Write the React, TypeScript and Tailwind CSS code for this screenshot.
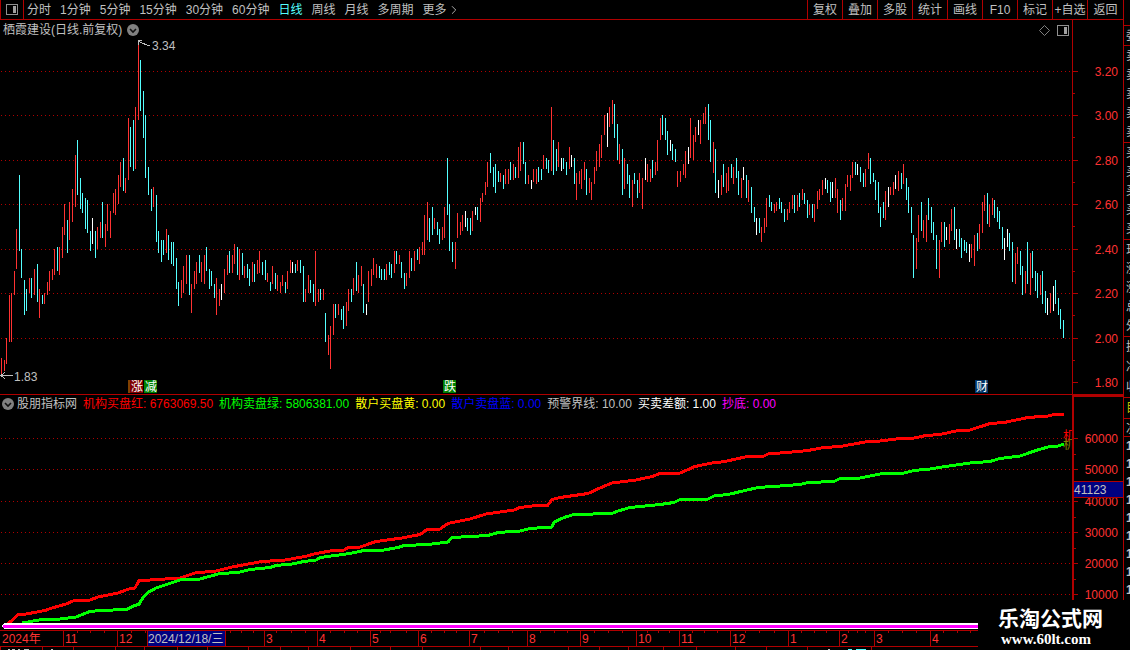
import { ChevronRight } from 'lucide-react';

// One entry per trading day: colour (r up, c down, w flat), top and bottom of the bar
const barGroups = [
  {
    start: 1,
    bars: `r298-314 r300-311 r278-304 r235-282 r233-282 r211-235 r169-209 c115-191 c189-218 c220-255
      c229-251 r218-233 c218-238 r209-235 c204-242 r229-258 c235-244 r233-244 r222-235 r211-231
      r209-220 r189-215 c187-211 r187-215 r167-198 r144-175 c160-193 r142-180 r129-162 r95-147
      c80-135 c118-149 c133-153 c138-169 c140-173 c171-191 w158-184 c171-198 r167-189 r162-178
      c142-178 r164-187 r144-171 r151-178 r133-153 r129-155 r115-144 r102-127 c98-131 r118-133
      r58-120 c67-107 c60-111 r47-109 r-20-60 c0-51 c31-78 c55-118 c107-135 c129-151
      r127-147 c135-182 c171-193 c180-202 c180-195 r169-193 c175-200 c182-204 c182-206 c198-229
      c222-246 r220-238 r206-233 r195-224 c195-235 r224-253 r211-229 r202-224 c195-213 r202-222
      r195-224 c187-211 c209-229 c211-226 c224-238 r218-255 r229-246 w224-240 r209-233 r195-215
      c191-213 r195-213 r184-204 c187-215 r189-220 c193-215 r206-218 c204-218 c209-226 r202-222
      c204-222 r200-214 r191-213 c202-215 c200-220 r213-222 c222-231 r206-224 c213-229 r215-231
      r222-233 r215-226 c222-233 r211-229 r200-213 w202-213 c204-213 r200-211 c200-213 c206-242
      r229-242 r215-233 c220-233 c224-242 r191-246 r229-242 c229-240 r229-240 c253-282 r275-295
      r266-309 r244-275 c244-258 r244-255 c249-260 c246-269 r242-266 r229-251 c229-242 r218-235
      c202-231 r215-233 r206-226 c224-253 w244-255 r211-242 r209-226 r198-215 r204-218 c206-218`,
  },
  {
    start: 381,
    bars: `c209-220 c209-220 r204-220 c202-215 c204-218 r191-213 c191-204 r195-204 c202-218 c213-229
      r213-226 r191-218 c198-211 r191-211 c189-200 r187-204 r182-195 r155-195 r142-180 c158-182
      c147-175 r158-169 c162-175 c169-184 r167-180 r147-178 c98-155 c144-191 c182-202 r182-209
      r153-178 r162-175 r155-171 w151-167 c158-171 c158-175 r151-171 w147-155 c147-160 r138-162
      r133-142 r122-135 r102-127 c93-113 c107-127 c104-133 c111-122 r113-122 c115-129 r109-124
      r109-124 c102-120 r104-120 c107-118 r87-118 r82-111 c82-104 c102-124 r115-124 w120-129
      r109-122 r109-124 c107-122 c109-120 r95-109 c98-109 c100-113 r47-111 c80-115 c89-111
      r82-107 w98-111 c98-109 c102-115 r87-109 w95-107 c98-124 r113-140 r111-124 r109-129
      r102-120 c109-135 r118-133 r122-140 r107-124 r91-111 r84-107 r75-98 r55-75 w53-87
      r47-67 r40-64 c44-78 c64-100 r84-104 c89-135 r98-129 c104-124 c115-138 r120-147
      c113-124 c120-138 r113-133 r118-149 w98-120 r104-122 r109-122 c100-118 r102-115 r80-111
      r58-80 c55-75 c58-80 c71-95 w80-91 c84-100 c89-102 r111-127 r111-122 r104-115
      r91-118 w87-104 r58-98 r75-100 r67-82 w60-75 r60-84 r53-64 r47-64 c44-80
      c60-102 r82-113 c89-133 w120-138 r115-135 c104-127 r113-133 r107-131 c104-118 r107-124
      c98-118 c111-135 r118-138 w107-120 c115-138 r120-142`,
  },
  {
    start: 751,
    bars: `c127-153 c147-162 w158-175 c158-173 r167-182 r158-173 r138-167 c135-147 c142-151 r144-153
      r142-151 c138-149 c142-153 c149-162 r149-160 r142-153 r135-149 c135-153 r135-151 c133-147
      r129-140 c133-144 c140-158 r144-155 c144-158 r144-162 r131-149 r129-140 r120-135 w118-129
      c120-133 c122-142 w122-138 r118-138 r129-153 c140-160 r138-151 r124-151 r115-127 r115-131
      r102-118 c102-115 w104-115 c107-122 c113-127 r109-127 r93-109 c98-124 c113-122 c120-140
      c122-153 c147-167 c142-158 r131-160 w127-147 r127-135 r122-135 w115-129 r111-131 c113-129
      r104-124 c118-140 c127-153 c147-173 c175-218 r178-209 r155-182 c142-171 r160-178 r155-182
      c138-160 c147-173 c162-180 c175-209 r180-218 r162-182 c162-187 w167-180 r164-184 r149-171
      c147-180 w169-189 c169-187 c178-198 c180-191 c182-193 w184-202 r184-198 r175-206 c173-191
      r164-189 r142-173 r135-151 c133-164 r144-167 r138-155 c140-158 c147-162 c151-169 c167-189
      w178-200 w169-187 c173-191 c182-222 r193-224 r187-204 c191-215 c206-235 r211-233 c182-224
      r193-235 c191-218 c211-231 c213-238 r215-235 c211-244 c231-253 w238-255 r233-253 w226-251
      c220-244 c238-255 c249-269 c260-278`,
  },
];

const barColors: Record<string, string> = { r: '#ff3232', c: '#54ffff', w: '#ffffff' };
const BAR_STEP = 2.533;

const bars = barGroups.flatMap(({ start, bars }) =>
  bars.split(/\s+/).map((entry, i) => {
    const [, color, top, bottom] = entry.match(/^([rcw])(-?\d+)-(\d+)$/)!;
    return {
      x: Math.floor(start + 0.6 + i * BAR_STEP),
      top: Number(top),
      height: Number(bottom) - Number(top),
      color: barColors[color],
    };
  })
);

const buyLine =
  '3,626 9,623 18,614.5 26,614 45,610.5 52,608 66,604 74,600.5 90,600 98,597 118,593 129,589 135,588 139,580.5 150,580 180,578 195,573 216,571 232,567 262,561.5 285,560 305,556.5 316,553.5 333,550.5 344,550 348,547.5 360,547 376,541.5 402,538 420,534.5 427,529.5 440,529 448,523.5 455,522 470,519 486,514 514,510 520,507.5 540,505 548,505 552,499.5 560,497.5 588,493.5 600,488 612,483 636,480 652,476.5 660,473.5 680,473 695,466.5 712,463 725,461.5 747,456.5 764,456 768,454 798,451.5 808,450.5 824,447.5 840,446.5 868,441.5 880,441 900,438.5 914,438 926,435.5 940,434.5 958,430.5 970,430 990,423.5 1004,422.5 1028,417.5 1048,416 1052,415 1064,414.5';
const sellLine =
  '22,623 42,619.5 60,619 76,617 90,611.5 100,610.5 127,609.5 134,605.5 139,604.5 142,599 148,592.5 156,588 168,584 180,580 200,579 218,574 240,572 250,569.5 270,567.5 276,565.5 292,564 304,561.5 316,560 320,557.5 350,553.5 364,550.5 384,550 398,547.5 404,545.5 428,544.5 448,542 452,537.5 488,535.5 498,532.5 520,531 530,528.5 552,527 554,522 564,517.5 574,514.5 612,513.5 618,511 630,507.5 660,504.5 674,502.5 680,499.5 707,499.5 714,496 728,494.5 758,487.5 780,486 800,484.5 808,482.5 834,481.5 840,478.5 860,478 880,474 904,473 914,470.5 930,469 942,467 970,463 990,461.5 1000,458.5 1020,456 1036,450.5 1048,447 1058,446 1064,444';

const periods = ['分时', '1分钟', '5分钟', '15分钟', '30分钟', '60分钟', '日线', '周线', '月线', '多周期'];
const tools = ['复权', '叠加', '多股', '统计', '画线', 'F10', '标记', '+自选', '返回'];

const priceTicks = [
  { y: 33, label: '3.20' },
  { y: 77, label: '3.00' },
  { y: 122, label: '2.80' },
  { y: 166, label: '2.60' },
  { y: 211, label: '2.40' },
  { y: 255, label: '2.20' },
  { y: 300, label: '2.00' },
  { y: 344, label: '1.80' },
];

const volumeTicks = [
  { y: 26, label: '60000' },
  { y: 57, label: '50000' },
  { y: 89, label: '40000' },
  { y: 120, label: '30000' },
  { y: 151, label: '20000' },
  { y: 182, label: '10000' },
];

const readings = [
  { text: '机构买盘红: 6763069.50', className: 'text-[#ff0000]' },
  { text: '机构卖盘绿: 5806381.00', className: 'text-[#00ff00]' },
  { text: '散户买盘黄: 0.00', className: 'text-[#ffff00]' },
  { text: '散户卖盘蓝: 0.00', className: 'text-[#0000ff]' },
  { text: '预警界线: 10.00', className: 'text-[#c0c0c0]' },
  { text: '买卖差额: 1.00', className: 'text-white' },
  { text: '抄底: 0.00', className: 'text-[#ff00ff]' },
];

const months = [
  { x: 63, label: '11' },
  { x: 117, label: '12' },
  { x: 264, label: '3' },
  { x: 317, label: '4' },
  { x: 370, label: '5' },
  { x: 418, label: '6' },
  { x: 469, label: '7' },
  { x: 527, label: '8' },
  { x: 580, label: '9' },
  { x: 636, label: '10' },
  { x: 679, label: '11' },
  { x: 730, label: '12' },
  { x: 788, label: '1' },
  { x: 839, label: '2' },
  { x: 874, label: '3' },
  { x: 930, label: '4' },
];

const weekTicks = [
  77, 90, 104, 131, 145, 230, 241, 253, 276, 291, 305, 330, 344, 357, 380, 390, 406, 431, 444, 456, 484, 498, 512,
  540, 554, 567, 594, 608, 622, 647, 658, 669, 692, 704, 717, 745, 759, 774, 801, 814, 826, 848, 857, 865, 888, 902,
  916, 943, 957, 970,
];

const footerTicks = [
  0, 42, 73, 115, 144, 177, 207, 248, 280, 308, 350, 390, 422, 480, 508, 568, 599, 628, 663, 696, 735, 766, 807, 871,
];

const quoteGroups = [
  { className: 'h-[20px] mt-[25px]', rows: ['委'] },
  { className: 'h-[97px]', rows: ['卖', '卖', '卖', '卖', '卖'] },
  { className: 'h-[97px]', rows: ['买', '买', '买', '买', '买'] },
  { className: 'h-[97px]', rows: ['现', '涨', '涨', '总', '外'] },
  { className: 'h-[61px]', rows: ['换', '净', '收'] },
];

function CollapseButton() {
  return (
    <button className="shrink-0" aria-label="收起">
      <svg className="w-3 h-3 block" viewBox="0 0 12 12" fill="none">
        <circle cx="6" cy="6" r="6" fill="#808080" />
        <path d="M3 5l3 3 3-3" stroke="#101010" strokeWidth="1.6" />
      </svg>
    </button>
  );
}

function PanelIcon({ className }: { className: string }) {
  return (
    <svg className={className} viewBox="0 0 12 11" fill="none" shapeRendering="crispEdges">
      <rect x="0.5" y="0.5" width="11" height="10" rx="1" stroke="#909090" />
      <rect x="7" y="2" width="3" height="7" fill="#a0a0a0" />
    </svg>
  );
}

function Toolbar() {
  return (
    <header className="flex h-5 shrink-0 border-b border-[#b00000] text-[#c0c0c0]">
      <button className="w-6 flex items-center justify-center border-x border-[#b00000]" aria-label="侧栏">
        <PanelIcon className="w-3 h-[11px]" />
      </button>
      <nav className="flex flex-1 items-center gap-[9px] pl-[3px] whitespace-nowrap">
        {periods.map((period) => (
          <button key={period} className={period === '日线' ? 'text-[#54ffff]' : ''}>
            {period}
          </button>
        ))}
        <button className="flex items-center">
          更多
          <ChevronRight className="w-3.5 h-3.5" strokeWidth={1.5} />
        </button>
      </nav>
      <div className="flex whitespace-nowrap">
        {tools.map((tool) => (
          <button key={tool} className="w-[35px] last:w-9 border-l border-[#b00000] text-center">
            {tool}
          </button>
        ))}
      </div>
    </header>
  );
}

function Grid({ rows }: { rows: number[] }) {
  return (
    <>
      {rows.map((y) => (
        <line key={y} x1="1" x2="100%" y1={y + 0.5} y2={y + 0.5} stroke="#b00000" strokeDasharray="1 3" />
      ))}
    </>
  );
}

interface MarkProps {
  x: number;
  fill: string;
  label: string;
}

function Mark({ x, fill, label }: MarkProps) {
  return (
    <g>
      <rect x={x} y="342" width="13" height="13" fill={fill} />
      <text x={x + 1} y="353" fill="#ffffff">
        {label}
      </text>
    </g>
  );
}

function PriceChart() {
  return (
    <section className="flex shrink-0 border-b border-[#b00000]">
      <div className="flex-1 min-w-0">
        <div className="flex h-[18px] items-center gap-[5px] pt-0.5 px-[3px] text-[#c0c0c0]">
          <h1>栖霞建设(日线.前复权)</h1>
          <CollapseButton />
          <button className="ml-auto mr-0.5" aria-label="标记点">
            <svg className="w-[11px] h-[11px] block" viewBox="0 0 11 11" fill="none">
              <path d="M5.5 0.5l5 5-5 5-5-5z" stroke="#808080" />
            </svg>
          </button>
          <button aria-label="面板">
            <PanelIcon className="w-3 h-[11px]" />
          </button>
        </div>
        <svg className="block w-full h-[356px] text-xs" shapeRendering="crispEdges">
          <Grid rows={[33, 77, 122, 166, 211, 255, 300]} />
          <g transform="translate(0 22)">
            {bars.map((bar) => (
              <rect key={bar.x} x={bar.x} y={bar.top} width="1" height={bar.height} fill={bar.color} />
            ))}
          </g>
          <path d="M138.5 6.5v-4.500M138 2.500h4M139 3.500l3 1.500 5 2h3" fill="none" stroke="#c0c0c0" />
          <text x="152" y="12" fill="#c0c0c0">
            3.34
          </text>
          <path d="M1 337.500h12M5 334.500l-4 3 4 3" fill="none" stroke="#c0c0c0" />
          <text x="14" y="343" fill="#c0c0c0">
            1.83
          </text>
          <rect x="128" y="342" width="3" height="13" fill="#804000" />
          <Mark x={130} fill="#800000" label="涨" />
          <Mark x={144} fill="#008000" label="减" />
          <Mark x={443} fill="#008000" label="跌" />
          <Mark x={975} fill="#003366" label="财" />
        </svg>
      </div>
      <div className="w-[51px] border-l border-[#b00000]">
        <svg className="block w-full h-[374px]" shapeRendering="crispEdges">
          {priceTicks.map(({ y, label }) => (
            <g key={label}>
              <path d={`M0 ${y + 18.5}h5`} stroke="#b00000" />
              {label !== '1.80' && <path d={`M0 ${y + 40.5}h2`} stroke="#b00000" />}
              <text x="45" y={y + 23} textAnchor="end" fill="#ff3232">
                {label}
              </text>
            </g>
          ))}
        </svg>
      </div>
    </section>
  );
}

function IndicatorChart() {
  return (
    <section className="flex shrink-0">
      <div className="flex-1 min-w-0">
        <div className="flex h-[17px] items-center gap-[6px] pl-0.5 whitespace-nowrap text-[#c0c0c0]">
          <div className="flex items-center gap-[3px]">
            <CollapseButton />
            <h2>股朋指标网</h2>
          </div>
          {readings.map(({ text, className }) => (
            <span key={text} className={className}>
              {text}
            </span>
          ))}
        </div>
        <svg className="block w-full h-[218px]" shapeRendering="crispEdges">
          <Grid rows={volumeTicks.map((tick) => tick.y)} />
          <g transform="translate(0 -412)" fill="none" strokeWidth="3">
            <polyline points={buyLine} stroke="#ff0000" />
            <polyline points={sellLine} stroke="#00ff00" />
          </g>
          <text x="1063" y="28" fill="#ff0000">
            机
          </text>
          <text x="1063" y="37" fill="#808000">
            机
          </text>
          <path d="M1 214l4-3v6z" fill="#ffffff" />
          <rect x="4" y="211" width="100%" height="6" fill="#ffffff" />
          <rect x="3" y="213" width="100%" height="3" fill="#ff00ff" />
        </svg>
      </div>
      <div className="relative w-[51px] border-2 border-r-0 border-b-0 border-[#b00000]">
        <svg className="block w-full h-[233px]" shapeRendering="crispEdges">
          {volumeTicks.map(({ y, label }) => (
            <g key={label}>
              <path d={`M0 ${y + 15.5}h4`} stroke="#b00000" />
              {label !== '60000' && <path d={`M0 ${y + 0.5}h2`} stroke="#b00000" />}
              <text x="44" y={y + 20} textAnchor="end" fill="#ff3232">
                {label}
              </text>
            </g>
          ))}
        </svg>
        <div className="absolute left-0 right-0 top-[84px] h-[17px] flex items-center border-y border-[#b00000] bg-[#000080] text-[#c0c0c0]">
          41123
        </div>
      </div>
    </section>
  );
}

function TimeAxis() {
  return (
    <div className="relative shrink-0 border-y border-[#b00000]">
      <svg className="block w-full h-[15px]" shapeRendering="crispEdges">
        <text x="2" y="12" fill="#ff3232">
          2024年
        </text>
        {months.map(({ x, label }) => (
          <g key={x}>
            <path d={`M${x + 0.5} 0v15`} stroke="#b00000" />
            <text x={x + 2} y="12" fill="#ff3232">
              {label}
            </text>
          </g>
        ))}
        {weekTicks.map((x) => (
          <path key={x} d={`M${x + 0.5} 0v2`} stroke="#b00000" />
        ))}
      </svg>
      <div className="absolute left-[147px] top-0 h-[15px] w-[79px] flex items-center border-x border-[#b00000] bg-[#000080] text-[#c0c0c0] whitespace-nowrap">
        2024/12/18/三
      </div>
    </div>
  );
}

function QuoteStrip() {
  return (
    <aside className="w-[7px] shrink-0 overflow-hidden border-l border-[#b00000] text-[#c0c0c0] leading-none">
      {quoteGroups.map(({ className, rows }, i) => (
        <div key={i} className={`pl-0.5 flex flex-col justify-around border-t border-[#b00000] ${className}`}>
          {rows.map((row, j) => (
            <span key={j} className="w-3">
              {row}
            </span>
          ))}
        </div>
      ))}
      <div className="h-[21px] pl-0.5 pt-1 border-t border-[#b00000] text-[#c0c000]">
        <span className="block w-3">目</span>
      </div>
      <div className="h-[19px] pl-0.5 pt-1 border-y border-[#b00000]">
        <span className="block w-3">次</span>
      </div>
      {[0, 1, 2, 3, 4, 5, 6, 7, 8].map((row) => (
        <div key={row} className="h-[18px] pl-0.5 leading-[18px] font-bold">
          1
        </div>
      ))}
    </aside>
  );
}

export default function App() {
  return (
    <div className="relative flex h-screen overflow-hidden bg-black text-xs font-['Liberation_Sans','Noto_Sans_CJK_SC',sans-serif]">
      <main className="flex flex-1 min-w-0 flex-col">
        <Toolbar />
        <PriceChart />
        <IndicatorChart />
        <TimeAxis />
        <svg className="block w-full h-[3px]" shapeRendering="crispEdges">
          {footerTicks.map((x) => (
            <path key={x} d={`M${x + 0.5} 0v3`} stroke="#b00000" />
          ))}
          <path d="M8 2.500h2m2 0h3m3 0h2m4 0h5M51 2.500h2M828 2.500h2" stroke="#c0c0c0" />
          <path d="M848 2.500h4m4 0h10" stroke="#54ffff" />
        </svg>
      </main>
      <QuoteStrip />
      <div className="absolute right-0 bottom-0 w-[152px] h-[50px] pl-5 pt-2 bg-black text-white font-bold">
        <div className="text-[21px] leading-[22px]">乐淘公式网</div>
        <a
          href="#"
          className="block pl-[3px] text-[15px] leading-[18px] font-['Liberation_Serif',serif]"
        >
          www.60lt.com
        </a>
      </div>
    </div>
  );
}
